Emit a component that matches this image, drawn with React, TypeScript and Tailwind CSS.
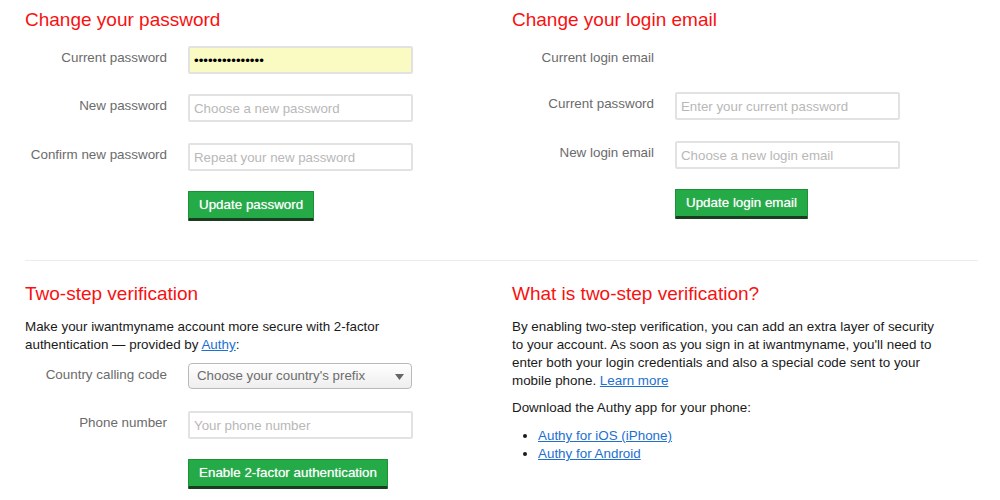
import React from "react";

const font = { fontFamily: '"Liberation Sans", Arial, Helvetica, sans-serif' };

function Label({ children }: { children: React.ReactNode }) {
  return (
    <div className="w-[142px] shrink-0 pt-[3px] text-right text-[13.4px] leading-[18px] text-[#6b6b6b]">
      {children}
    </div>
  );
}

function TextInput({ placeholder, password, value, yellow }: { placeholder?: string; password?: boolean; value?: string; yellow?: boolean }) {
  return (
    <input
      type={password ? "password" : "text"}
      readOnly
      defaultValue={value}
      placeholder={placeholder}
      className={`h-[28px] w-[225px] rounded-[2px] border-2 border-[#e2e2e2] px-[4px] text-[13.3px] text-black placeholder:text-[#b8b8b8] outline-none ${
        yellow ? "bg-[#fafbc3]" : "bg-white"
      }`}
      style={font}
    />
  );
}

function GreenButton({ children }: { children: React.ReactNode }) {
  return (
    <button
      className="h-[30px] rounded-[1px] border border-b-[3px] border-[#1f8f3a] border-b-[#1a3d20] bg-[#25aa48] px-[10px] text-[13.4px] leading-[16px] text-white [text-shadow:0_0_1px_rgba(255,255,255,0.6)]"
      style={font}
    >
      {children}
    </button>
  );
}

function Row({ label, children, className = "" }: { label: string; children?: React.ReactNode; className?: string }) {
  return (
    <div className={`flex items-start gap-[21px] ${className}`}>
      <Label>{label}</Label>
      {children}
    </div>
  );
}

export default function App() {
  return (
    <div className="min-h-[500px] w-[1000px] bg-white" style={font}>
      <div className="ml-[25px] w-[953px]">
        {/* Top section */}
        <div className="grid grid-cols-2 gap-x-[21px] pt-[9px] pb-[39px]">
          <div>
            <h2 className="text-[19px] leading-[22px] text-[#f81111]">Change your password</h2>
            <div className="mt-[15px] flex flex-col gap-[20px]">
              <Row label="Current password">
                <TextInput password value="aaaaaaaaaaaaaaa" yellow />
              </Row>
              <Row label="New password">
                <TextInput placeholder="Choose a new password" />
              </Row>
              <Row label="Confirm new password" className="mt-[1px]">
                <TextInput placeholder="Repeat your new password" />
              </Row>
              <Row label="">
                <GreenButton>Update password</GreenButton>
              </Row>
            </div>
          </div>
          <div>
            <h2 className="text-[19px] leading-[22px] text-[#f81111]">Change your login email</h2>
            <div className="mt-[15px] flex flex-col gap-[20px]">
              <Row label="Current login email" className="h-[26px]" />
              <Row label="Current password">
                <TextInput placeholder="Enter your current password" />
              </Row>
              <Row label="New login email" className="mt-[1px]">
                <TextInput placeholder="Choose a new login email" />
              </Row>
              <Row label="">
                <GreenButton>Update login email</GreenButton>
              </Row>
            </div>
          </div>
        </div>

        <div className="h-px bg-[#ececec]" />

        {/* Bottom section */}
        <div className="grid grid-cols-2 gap-x-[21px] pt-[22px]">
          <div>
            <h2 className="text-[19px] leading-[22px] text-[#f81111]">Two-step verification</h2>
            <p className="mt-[13px] text-[13.4px] leading-[18px] text-[#1a1a1a]">
              Make your iwantmyname account more secure with 2-factor
              <br />
              authentication — provided by{" "}
              <a href="#" className="text-[#1d6fd0] underline">
                Authy
              </a>
              :
            </p>
            <div className="mt-[9px] flex flex-col">
              <Row label="Country calling code">
                <div className="relative h-[26px] w-[224px] rounded-[4px] border border-[#b9b9b9] bg-gradient-to-b from-white to-[#eeeeee] shadow-[inset_0_1px_0_#fff]">
                  <span className="absolute left-[8px] top-[4px] text-[13.3px] leading-[16px] text-[#6d6d6d]">
                    Choose your country's prefix
                  </span>
                  <svg className="absolute right-[7px] top-[10px]" width="9" height="6" viewBox="0 0 9 6">
                    <path d="M0 0 L9 0 L4.5 6 Z" fill="#666" />
                  </svg>
                </div>
              </Row>
              <Row label="Phone number" className="mt-[22px]">
                <TextInput placeholder="Your phone number" />
              </Row>
              <Row label="" className="mt-[20px]">
                <GreenButton>Enable 2-factor authentication</GreenButton>
              </Row>
            </div>
          </div>
          <div>
            <h2 className="text-[19px] leading-[22px] text-[#f81111]">What is two-step verification?</h2>
            <p className="mt-[13px] text-[13.4px] leading-[18px] text-[#1a1a1a]">
              By enabling two-step verification, you can add an extra layer of security
              <br />
              to your account. As soon as you sign in at iwantmyname, you'll need to
              <br />
              enter both your login credentials and also a special code sent to your
              <br />
              mobile phone.{" "}
              <a href="#" className="text-[#1d6fd0] underline">
                Learn more
              </a>
            </p>
            <p className="mt-[9px] text-[13.4px] leading-[18px] text-[#1a1a1a]">Download the Authy app for your phone:</p>
            <ul className="mt-[10px] list-disc pl-[26px] text-[13.4px] leading-[18px] text-[#1a1a1a]">
              <li>
                <a href="#" className="text-[#1d6fd0] underline">
                  Authy for iOS (iPhone)
                </a>
              </li>
              <li>
                <a href="#" className="text-[#1d6fd0] underline">
                  Authy for Android
                </a>
              </li>
            </ul>
          </div>
        </div>
      </div>
    </div>
  );
}
